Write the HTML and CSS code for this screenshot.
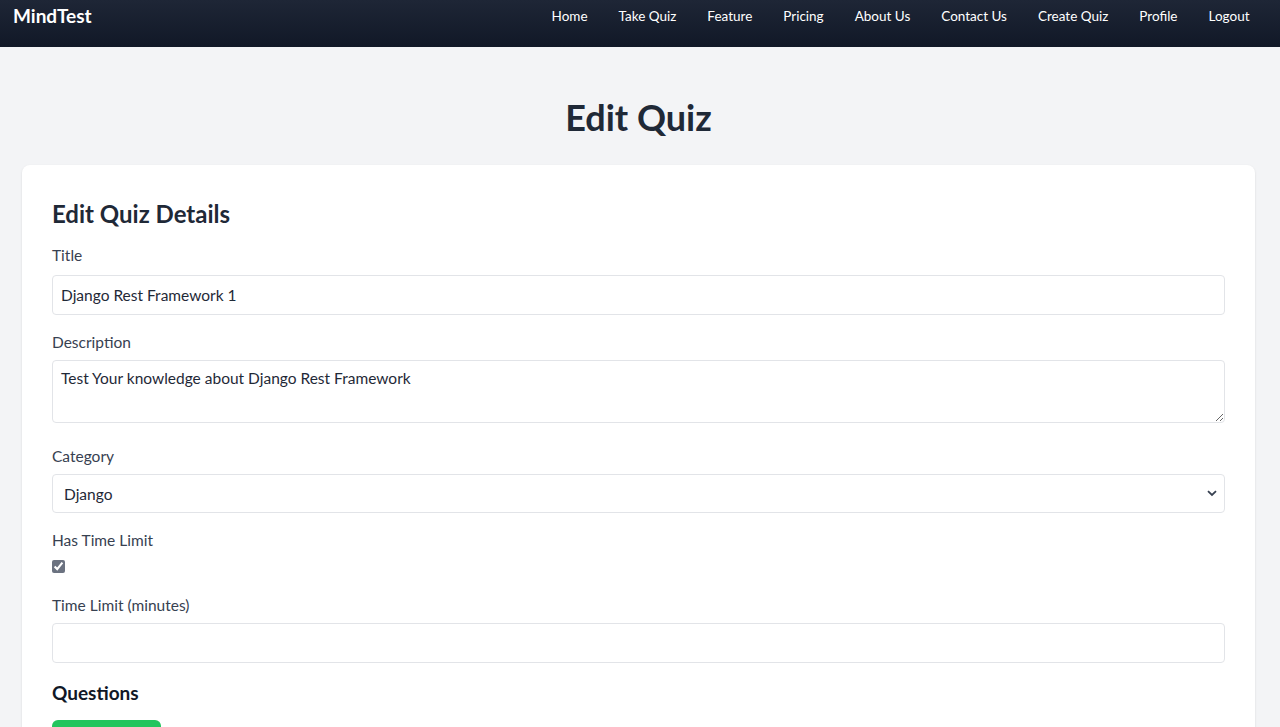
FILE: index.html
```html
<!DOCTYPE html>
<html>
<head>
<meta charset="utf-8">
<link rel="stylesheet" href="styles.css">
</head>
<body>
<nav class="navbar">
  <a class="brand" href="#">MindTest</a>
  <ul class="nav-links">
    <li><a href="#">Home</a></li>
    <li><a href="#">Take Quiz</a></li>
    <li><a href="#">Feature</a></li>
    <li><a href="#">Pricing</a></li>
    <li><a href="#">About Us</a></li>
    <li><a href="#">Contact Us</a></li>
    <li><a href="#">Create Quiz</a></li>
    <li><a href="#">Profile</a></li>
    <li><a href="#">Logout</a></li>
  </ul>
</nav>
<main class="page">
  <h1 class="page-title">Edit Quiz</h1>
  <section class="card">
    <h2 class="card-title">Edit Quiz Details</h2>
    <div class="field">
      <label class="label">Title</label>
      <input class="input" type="text" value="Django Rest Framework 1">
    </div>
    <div class="field">
      <label class="label">Description</label>
      <textarea class="input textarea">Test Your knowledge about Django Rest Framework</textarea>
    </div>
    <div class="field">
      <label class="label">Category</label>
      <div class="select-wrap">
        <select class="input select"><option>Django</option></select>
        <svg class="chev" width="10" height="7" viewBox="0 0 10 7"><path d="M1 1.2 L5 5 L9 1.2" fill="none" stroke="#374151" stroke-width="1.8"/></svg>
      </div>
    </div>
    <div class="field">
      <label class="label">Has Time Limit</label>
      <input class="check" type="checkbox" checked>
    </div>
    <div class="field">
      <label class="label">Time Limit (minutes)</label>
      <input class="input tight" type="text" value="">
    </div>
    <h3 class="section-title">Questions</h3>
    <button class="btn-green">Add Question</button>
  </section>
</main>
</body>
</html>
```

FILE: styles.css
```css
* { box-sizing: border-box; }
html, body { margin: 0; padding: 0; }
body {
  background: #f3f4f6;
  font-family: Lato, "Open Sans", sans-serif;
  color: #1f2937;
  height: 727px;
  overflow: hidden;
}
.navbar {
  height: 47px;
  background: linear-gradient(to bottom, #1e2636, #111827);
  display: flex;
  justify-content: space-between;
  align-items: flex-start;
  padding: 0 15px 0 13px;
}
.brand {
  color: #ffffff;
  text-decoration: none;
  font-weight: 700;
  font-size: 19px;
  line-height: 32px;
}
.nav-links {
  display: flex;
  list-style: none;
  margin: 0;
  padding: 0;
}
.nav-links a {
  display: block;
  color: #ffffff;
  text-decoration: none;
  font-size: 13.5px;
  line-height: 32px;
  padding: 0 15.5px;
}
.page {
  padding: 0 25px 0 22px;
}
.page-title {
  margin: 50px 0 28px;
  text-align: center;
  font-size: 36px;
  line-height: 40px;
  font-weight: 700;
  color: #1f2937;
}
.card {
  background: #ffffff;
  border-radius: 8px;
  box-shadow: 0 1px 3px rgba(0,0,0,0.08), 0 1px 2px rgba(0,0,0,0.04);
  padding: 33px 30px 40px;
  height: 600px;
}
.card-title {
  margin: 0 0 13px;
  font-size: 24px;
  line-height: 32px;
  font-weight: 700;
  color: #1f2937;
}
.field {
  display: flow-root;
  margin-bottom: 15px;
}
.label {
  display: block;
  font-size: 15.5px;
  line-height: 24px;
  color: #374151;
  margin-bottom: 8px;
}
.input {
  display: block;
  width: 100%;
  height: 40px;
  border: 1px solid #e2e4e8;
  border-radius: 4px;
  padding: 0 8px;
  font-family: inherit;
  font-size: 15.5px;
  color: #1f2937;
  background: #ffffff;
  outline: none;
}
.tight {
  margin-top: -2px;
}
.textarea {
  display: inline-block;
  height: 63px;
  padding: 8px;
  resize: vertical;
  vertical-align: baseline;
  margin-top: -2px;
  margin-bottom: 3px;
}
.select-wrap {
  position: relative;
  margin-top: -2px;
}
.select {
  height: 39px;
  appearance: none;
  -webkit-appearance: none;
  padding: 0 11px;
}
.chev {
  position: absolute;
  right: 8px;
  top: 16px;
  pointer-events: none;
}
.check {
  display: block;
  width: 13px;
  height: 13px;
  margin: 3px 0 5px 0;
  accent-color: #6b7280;
}
.section-title {
  margin: 16px 0 13px;
  font-size: 19px;
  line-height: 28px;
  font-weight: 700;
  color: #111827;
}
.btn-green {
  background: #22c55e;
  color: #ffffff;
  border: none;
  border-radius: 6px;
  font-family: inherit;
  font-size: 15px;
  padding: 12px 16px;
  width: 109px;
}
```
